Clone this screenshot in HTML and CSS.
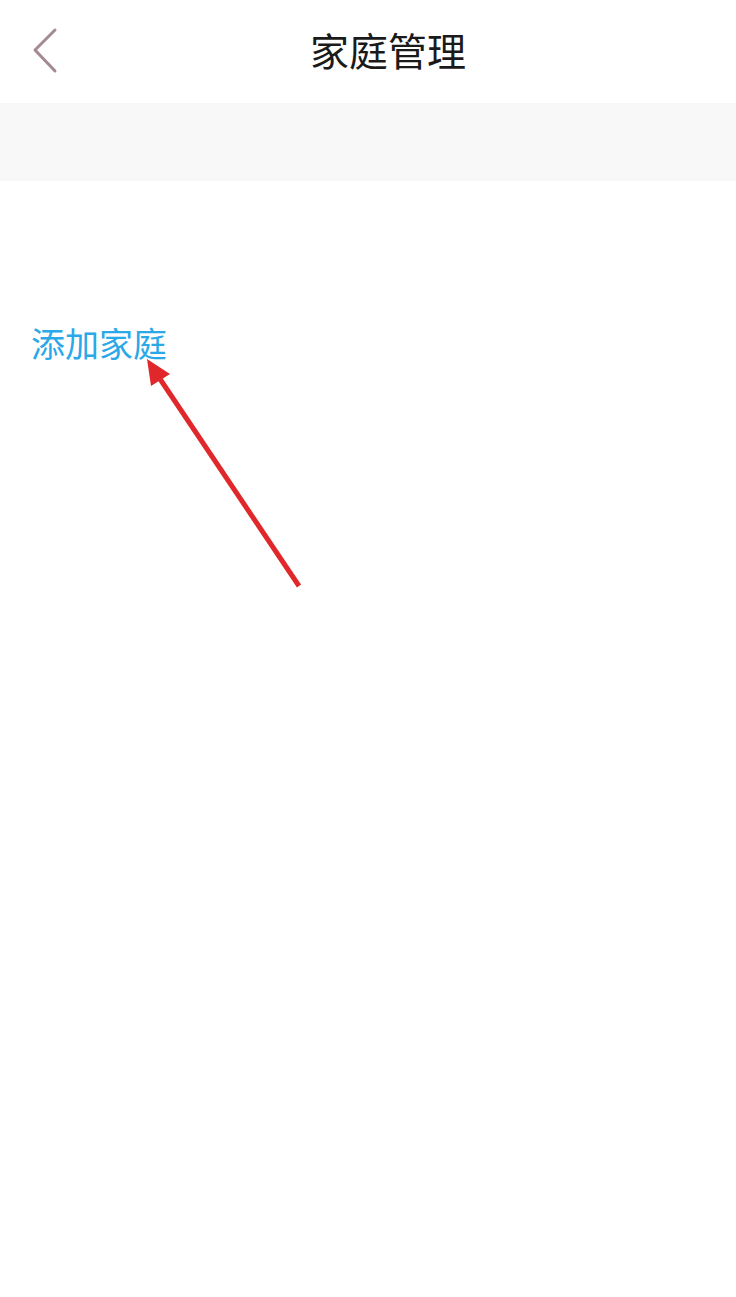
FILE: index.html
```html
<!DOCTYPE html>
<html lang="zh-CN">
<head>
<meta charset="utf-8">
<title>家庭管理</title>
<link rel="stylesheet" href="styles.css">
</head>
<body>
<div class="page">
  <header class="topbar">
    <button class="back" aria-label="返回">
      <svg width="30" height="48" viewBox="0 0 30 48"><polyline points="24,3 4,23 24,44" fill="none" stroke="#a38992" stroke-width="3" stroke-linecap="round" stroke-linejoin="round"/></svg>
    </button>
    <h1 class="title">家庭管理</h1>
  </header>
  <div class="band"></div>
  <main class="content">
    <a class="add" href="#">添加家庭</a>
  </main>
  <svg class="arrow" width="736" height="1297" viewBox="0 0 736 1297">
    <line x1="299" y1="586" x2="158" y2="376" stroke="#e0282c" stroke-width="5"/>
    <polygon points="147,359 170,374 151,386" fill="#e0282c"/>
  </svg>
</div>
</body>
</html>
```

FILE: styles.css
```css
html, body {
  margin: 0;
  padding: 0;
  background: #ffffff;
  font-family: "Noto Sans CJK SC", "Noto Sans", sans-serif;
}
.page {
  position: relative;
  width: 736px;
  height: 1297px;
  overflow: hidden;
}
.topbar {
  position: relative;
  height: 103px;
  display: flex;
  align-items: center;
  justify-content: center;
}
.back {
  position: absolute;
  left: 31px;
  top: 27px;
  border: 0;
  background: none;
  padding: 0;
  width: 30px;
  height: 48px;
}
.back svg { display: block; }
.title {
  margin: 0 0 4px 40px;
  font-size: 39px;
  font-weight: 400;
  color: #1a1a1a;
  line-height: 1;
}
.band {
  height: 78px;
  background: #f8f8f8;
}
.content {
  padding: 145px 0 0 31px;
}
.add {
  color: #2aa8e8;
  font-size: 34px;
  text-decoration: none;
  line-height: 1;
}
.arrow {
  position: absolute;
  left: 0;
  top: 0;
  pointer-events: none;
}
```
